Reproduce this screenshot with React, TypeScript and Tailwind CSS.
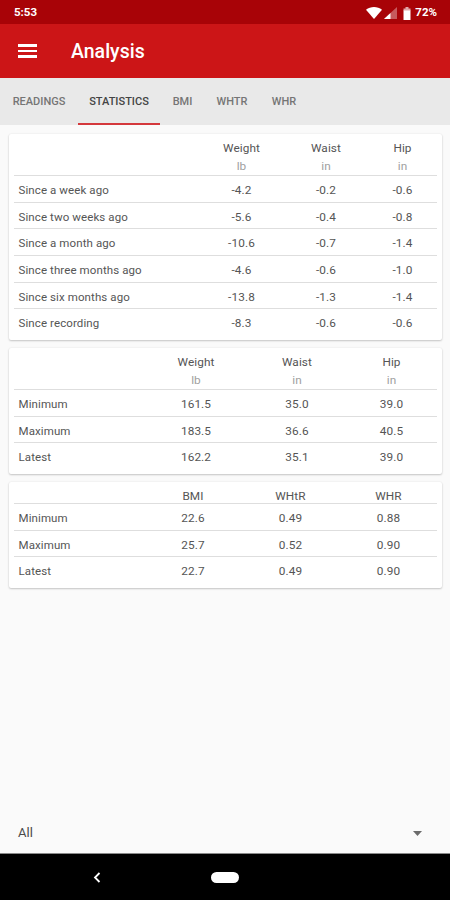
import clsx from 'clsx'

const tabs = [
  { label: 'READINGS', width: 'w-[78px]' },
  { label: 'STATISTICS', width: 'w-[82px]', active: true },
  { label: 'BMI', width: 'w-[45px]' },
  { label: 'WHTR', width: 'w-[54px]' },
  { label: 'WHR', width: 'w-[50px]' },
]

const changes = [
  ['Since a week ago', '-4.2', '-0.2', '-0.6'],
  ['Since two weeks ago', '-5.6', '-0.4', '-0.8'],
  ['Since a month ago', '-10.6', '-0.7', '-1.4'],
  ['Since three months ago', '-4.6', '-0.6', '-1.0'],
  ['Since six months ago', '-13.8', '-1.3', '-1.4'],
  ['Since recording', '-8.3', '-0.6', '-0.6'],
]

const measurements = [
  ['Minimum', '161.5', '35.0', '39.0'],
  ['Maximum', '183.5', '36.6', '40.5'],
  ['Latest', '162.2', '35.1', '39.0'],
]

const ratios = [
  ['Minimum', '22.6', '0.49', '0.88'],
  ['Maximum', '25.7', '0.52', '0.90'],
  ['Latest', '22.7', '0.49', '0.90'],
]

type StatsCardProps = {
  columns: string
  headers: string[]
  units?: string[]
  rows: string[][]
  className?: string
}

function StatsCard({ columns, headers, units, rows, className }: StatsCardProps) {
  return (
    <section
      className={clsx(
        'rounded-[2px] bg-white px-[5px] text-[11.8px] tracking-[0.1px] text-[#555] shadow-[0_1px_2px_rgba(0,0,0,0.2),0_0_2px_rgba(0,0,0,0.08)]',
        className
      )}
    >
      <div className={clsx('grid text-center', columns, units ? 'h-[41px] pt-1' : 'h-[21px] pt-1')}>
        <span />
        {headers.map((header) => (
          <span key={header} className="h-[18px] leading-5">{header}</span>
        ))}
        {units && <span />}
        {units?.map((unit, i) => (
          <span key={i} className="h-[18px] leading-[19px] text-[#a0a0a0]">{unit}</span>
        ))}
      </div>
      {rows.map(([label, ...values]) => (
        <div
          key={label}
          className={clsx('grid h-[26.7px] border-t border-[#dedede] text-center leading-[29px]', columns)}
        >
          <span className="pl-[4.5px] text-left text-[11.5px]">{label}</span>
          {values.map((value, i) => (
            <span key={i}>{value}</span>
          ))}
        </div>
      ))}
    </section>
  )
}

function StatusBar() {
  return (
    <div className="flex h-6 items-center justify-between bg-[#a80307] pt-[2px] pr-[13px] pl-[14px] text-[11.5px] font-bold text-white">
      <span>5:53</span>
      <div className="flex items-center">
        <svg width="16" height="12" viewBox="0 0 16 12" fill="currentColor">
          <path d="M0 2.7C4.5-.8 11.5-.8 16 2.7L8 12Z" />
        </svg>
        <svg className="ml-[2px]" width="13" height="12" viewBox="0 0 13 12" fill="currentColor">
          <path d="M0 12 13 0v12Z" opacity=".35" />
          <path d="M0 12 6.5 6v6Z" />
        </svg>
        <svg className="ml-[6px]" width="8" height="13" viewBox="0 0 8 13" fill="currentColor">
          <path d="M2.5 0h3v1.5H7.5V4H.5V1.5h2Z" opacity=".65" />
          <path d="M.5 3.5h7V13h-7Z" />
        </svg>
        <span className="ml-1">72%</span>
      </div>
    </div>
  )
}

export default function App() {
  return (
    <div className="flex h-[900px] w-[450px] flex-col bg-[#fafafa] font-['Roboto',sans-serif]">
      <StatusBar />

      <header className="flex h-[54px] items-center bg-[#cc1517] pl-[18px] text-white">
        <button aria-label="Menu" className="flex w-[19px] flex-col gap-[3px]">
          <span className="h-[2.5px] bg-white" />
          <span className="h-[2.5px] bg-white" />
          <span className="h-[2.5px] bg-white" />
        </button>
        <h1 className="ml-[34px] pt-[2px] text-[19.5px] font-medium">Analysis</h1>
      </header>

      <nav className="flex h-[47px] bg-[#e9e9e9]">
        {tabs.map((tab) => (
          <button
            key={tab.label}
            className={clsx(
              'border-b-2 pt-[3px] text-[11px] font-medium',
              tab.width,
              tab.active ? 'border-[#d4383c] text-[#444]' : 'border-transparent text-[#757575]'
            )}
          >
            {tab.label}
          </button>
        ))}
      </nav>

      <main className="flex-1 pt-[9px] pr-2 pl-[9px]">
        <StatsCard
          className="h-[206px]"
          columns="grid-cols-[185px_85px_84px_69px]"
          headers={['Weight', 'Waist', 'Hip']}
          units={['lb', 'in', 'in']}
          rows={changes}
        />
        <StatsCard
          className="mt-2 h-[126px]"
          columns="grid-cols-[130px_104px_98px_91px]"
          headers={['Weight', 'Waist', 'Hip']}
          units={['lb', 'in', 'in']}
          rows={measurements}
        />
        <StatsCard
          className="mt-2 h-[106px]"
          columns="grid-cols-[131px_96px_99px_97px]"
          headers={['BMI', 'WHtR', 'WHR']}
          rows={ratios}
        />
      </main>

      <div className="flex h-[44px] items-center justify-between pt-1 pr-[28px] pl-[18px] text-[13px] text-[#4a4a4a]">
        <span>All</span>
        <svg width="9" height="5" viewBox="0 0 9 5" fill="#6b6b6b">
          <path d="M0 0h9L4.5 5Z" />
        </svg>
      </div>

      <footer className="grid h-[47px] grid-cols-[1fr_28px_1fr] items-center border-t border-[#8a8a8a] bg-black">
        <svg className="ml-[93px]" width="8" height="11" viewBox="0 0 8 11" fill="none" stroke="#fff" strokeWidth="1.8">
          <path d="M6.5 1 2 5.5 6.5 10" />
        </svg>
        <span className="h-[11px] rounded-full bg-white" />
      </footer>
    </div>
  )
}
